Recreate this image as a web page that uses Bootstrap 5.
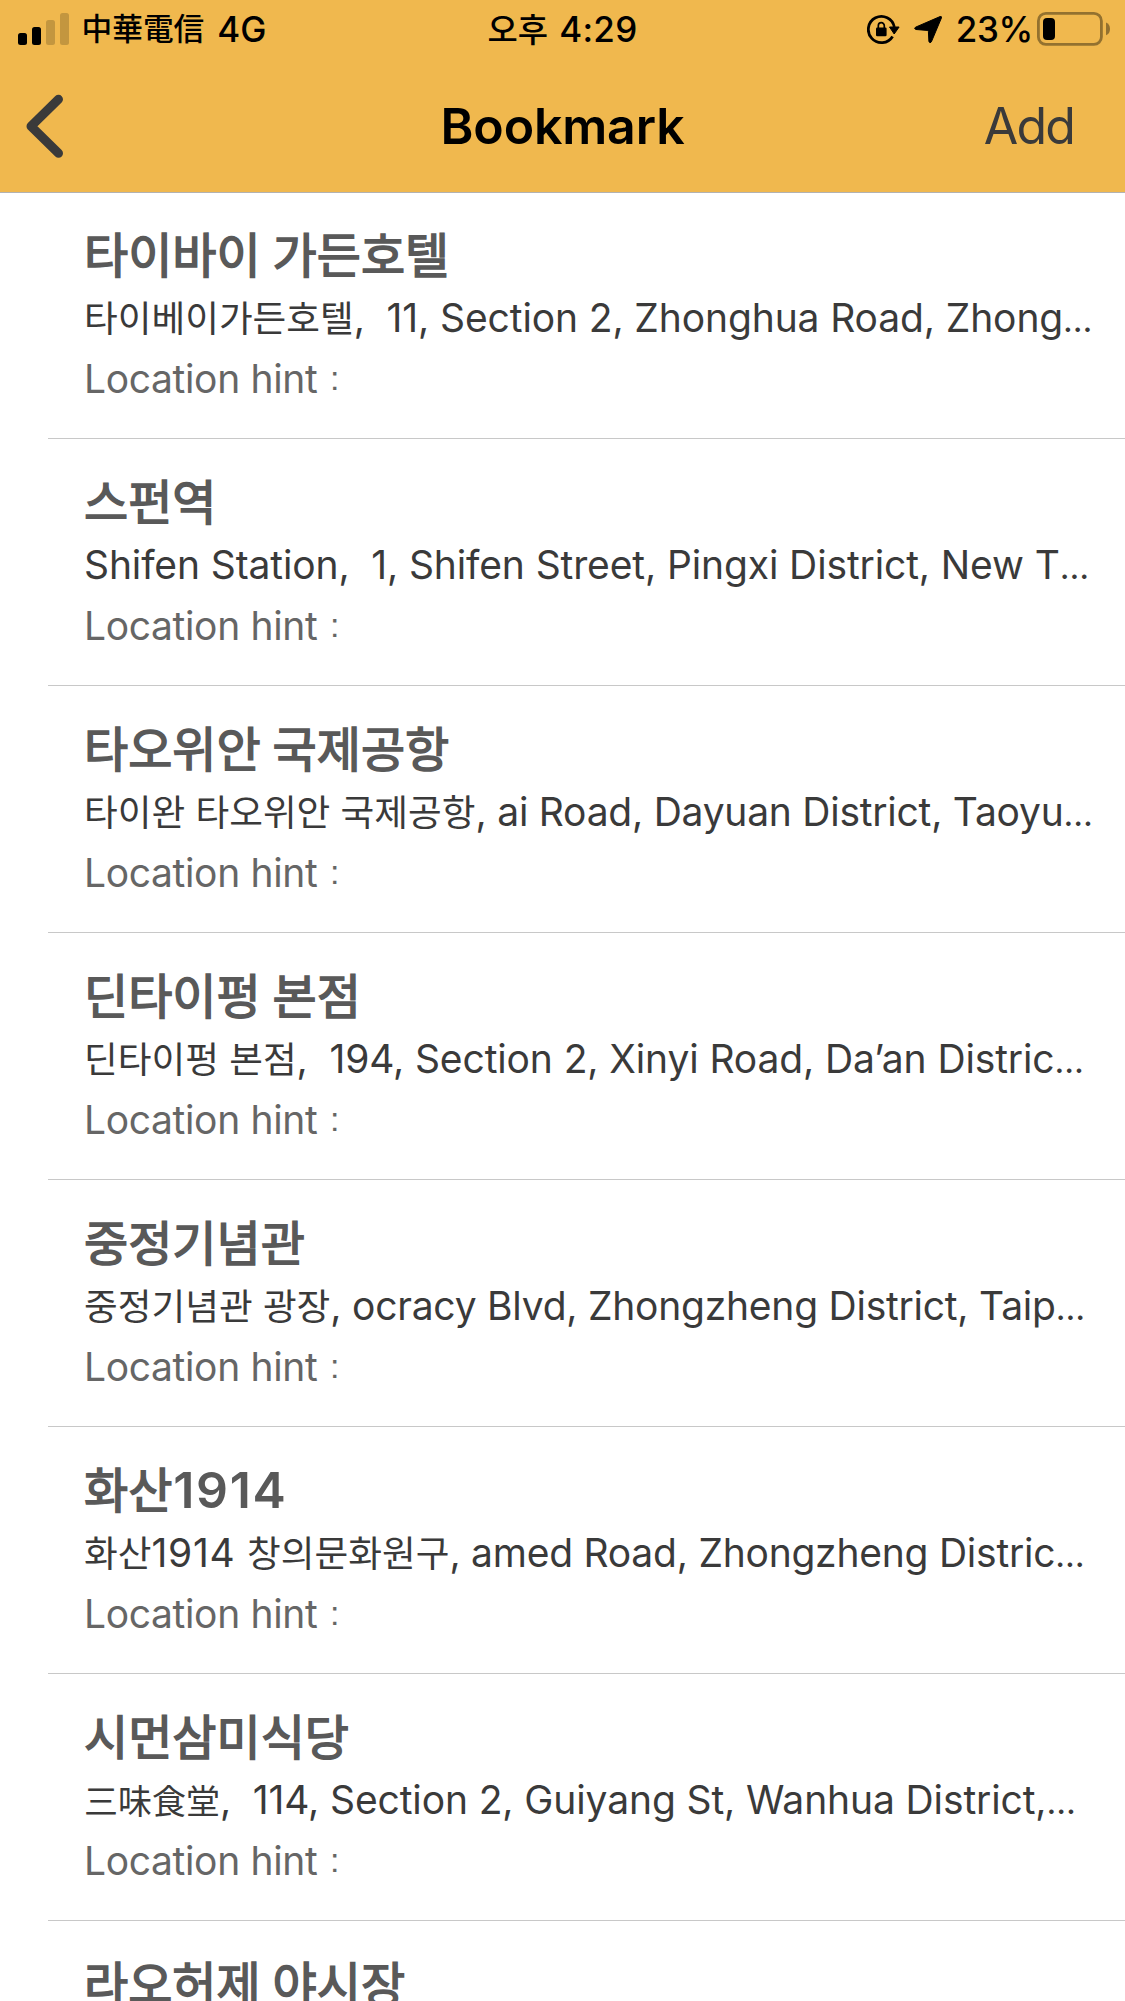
<!DOCTYPE html>
<html lang="ko">
<head>
<meta charset="utf-8">
<meta name="viewport" content="width=device-width, initial-scale=1">
<title>Bookmark</title>
<link href="https://cdn.jsdelivr.net/npm/bootstrap@5.3.0/dist/css/bootstrap.min.css" rel="stylesheet">
<style>
body{font-family:Inter,"Noto Sans CJK KR",sans-serif;color:#3a3a3a;background:#fff;height:2001px;overflow:hidden}
svg{display:block;flex:none}
.app-head{background:#f0b84e;height:193px;border-bottom:1px solid #b2b2b2}
.status-line{height:58px;padding:0 14px;font-size:35px;font-weight:500;color:#000;line-height:58px;white-space:nowrap}
.signal{margin-left:4px}
.clock{letter-spacing:.3px;word-spacing:1.5px}
.power{letter-spacing:-.3px}
.carrier{font-family:"Noto Sans CJK TC",sans-serif;font-size:30.7px;line-height:1;margin:-3px 13px 0 12.5px}
.title-bar{height:134px;padding:2px 26px 0}
.side{flex:1 1 0}
.page-name{font-size:50px;font-weight:600;color:#000;line-height:1;letter-spacing:-.15px}
.add-link{font-size:50px;color:#3a3a3a;line-height:1;letter-spacing:-1.8px;text-decoration:none;margin-right:25px}
.gap-icon{margin-left:14px}
.place{height:247px;margin-left:48px;padding:30px 0 0 36px;border-bottom:1px solid #c8c8c8}
.place:first-child{height:246px;padding-top:29px}
.place:last-child{height:81px;overflow:hidden}
.place-name{font-family:"Noto Sans CJK KR",sans-serif;font-size:48px;font-weight:400;-webkit-text-stroke:1.5px #595959;line-height:60px;color:#595959;margin:0 0 5px;word-spacing:-1.5px;white-space:nowrap}
.place-name .num{font-family:Inter,sans-serif;font-size:50px;font-weight:600;-webkit-text-stroke:0;letter-spacing:1.6px;line-height:1;margin-left:1px}
.place-addr{font-size:39px;line-height:61px;letter-spacing:-.12px;white-space:pre}
.place-hint{font-size:39px;line-height:61px;letter-spacing:-.35px;color:#666}
.hint-colon{font-family:"Liberation Sans",sans-serif;font-size:34px;line-height:1;vertical-align:3px;margin-left:2px}
.dots{font-size:34px;line-height:1}
.ko{font-family:"Noto Sans CJK KR",sans-serif;font-size:.94em;letter-spacing:0;line-height:1}
.zh{font-family:"Noto Sans CJK TC",sans-serif;font-size:34px;letter-spacing:0;line-height:1}
.tight{letter-spacing:-.24px}
.loose{letter-spacing:.7px}
</style>
</head>
<body>
<header class="app-head">
<div class="status-line d-flex align-items-center">
<div class="side d-flex align-items-center">
<svg class="signal" width="51" height="58" viewBox="18 0 51 58"><rect x="18" y="33" width="9" height="12" rx="2.5"/><rect x="32" y="27" width="9" height="18" rx="2.5"/><g fill="#c3963f"><rect x="46" y="20" width="9" height="25" rx="2.5"/><rect x="60" y="13" width="9" height="32" rx="2.5"/></g></svg>
<span class="carrier">中華電信</span><span>4G</span>
</div>
<div class="clock"><span class="ko">오후</span> 4:29</div>
<div class="side power d-flex align-items-center justify-content-end">
<svg width="33" height="58" viewBox="865 0 33 58"><path d="M892.3 27A13.1 13.1 0 1 0 890.6 36.4" fill="none" stroke="#000" stroke-width="2.8"/><path d="M887.5 27h9.6l-4.9 7z" stroke="#000" stroke-linejoin="round"/><rect x="874" y="27.5" width="10.6" height="8.7" rx="1.3"/><path d="M876.3 28v-2.3a3 3 0 0 1 6 0V28" fill="none" stroke="#000" stroke-width="1.7"/></svg>
<svg class="gap-icon" width="28" height="58" viewBox="913 0 28 58"><path d="M914.5 27.2 939 16.6q2-.6 1.400 1.400L930.400 41.800q-1.600 2.200-2.500-.4L927.400 31.500q0-1.100-1.100-1.100L915 29.500q-2.500-.8-.5-2.300z" stroke="#000" stroke-width="1"/></svg>
<span class="gap-icon">23%</span>
<svg class="ms-1" width="74" height="58" viewBox="1037 0 74 58"><rect x="1038.400" y="13.400" width="63" height="31" rx="7.500" fill="none" stroke="#93712f" stroke-width="2.800"/><rect x="1043" y="18" width="12" height="22" rx="4"/><path d="M1106 22.500q4 1.800 4 6.400t-4 6.400z" fill="#93712f"/></svg>
</div>
</div>
<div class="title-bar d-flex align-items-center">
<div class="side"><svg width="38" height="64" viewBox="26 94 38 64"><path d="M58.500 99.300 31 126.300l27.500 27" fill="none" stroke="#3a3a3a" stroke-width="9" stroke-linecap="round" stroke-linejoin="round"/></svg></div>
<h1 class="page-name m-0">Bookmark</h1>
<div class="side text-end"><a class="add-link">Add</a></div>
</div>
</header>
<main>
<div class="place"><h2 class="place-name">타이바이 가든호텔</h2><div class="place-addr"><span class="ko">타이베이가든호텔</span>,  11, Section 2, Zhonghua Road, Zhong<span class="dots">…</span></div><div class="place-hint">Location hint <span class="hint-colon">:</span></div></div>
<div class="place"><h2 class="place-name">스펀역</h2><div class="place-addr">Shifen Station,  1, Shifen Street, Pingxi District, New T<span class="dots">…</span></div><div class="place-hint">Location hint <span class="hint-colon">:</span></div></div>
<div class="place"><h2 class="place-name">타오위안 국제공항</h2><div class="place-addr tight"><span class="ko">타이완 타오위안 국제공항</span>, ai Road, Dayuan District, Taoyu<span class="dots">…</span></div><div class="place-hint">Location hint <span class="hint-colon">:</span></div></div>
<div class="place"><h2 class="place-name">딘타이펑 본점</h2><div class="place-addr"><span class="ko">딘타이펑 본점</span>,  194, Section 2, Xinyi Road, Da’an Distric<span class="dots">…</span></div><div class="place-hint">Location hint <span class="hint-colon">:</span></div></div>
<div class="place"><h2 class="place-name">중정기념관</h2><div class="place-addr tight"><span class="ko">중정기념관 광장</span>, ocracy Blvd, Zhongzheng District, Taip<span class="dots">…</span></div><div class="place-hint">Location hint <span class="hint-colon">:</span></div></div>
<div class="place"><h2 class="place-name">화산<span class="num">1914</span></h2><div class="place-addr tight"><span class="ko">화산</span><span class="loose">1914 </span><span class="ko">창의문화원구</span>, amed Road, Zhongzheng Distric<span class="dots">…</span></div><div class="place-hint">Location hint <span class="hint-colon">:</span></div></div>
<div class="place"><h2 class="place-name">시먼삼미식당</h2><div class="place-addr"><span class="zh">三味食堂</span>,  114, Section 2, Guiyang St, Wanhua District,<span class="dots">…</span></div><div class="place-hint">Location hint <span class="hint-colon">:</span></div></div>
<div class="place border-0"><h2 class="place-name">라오허제 야시장</h2></div>
</main>
</body>
</html>
